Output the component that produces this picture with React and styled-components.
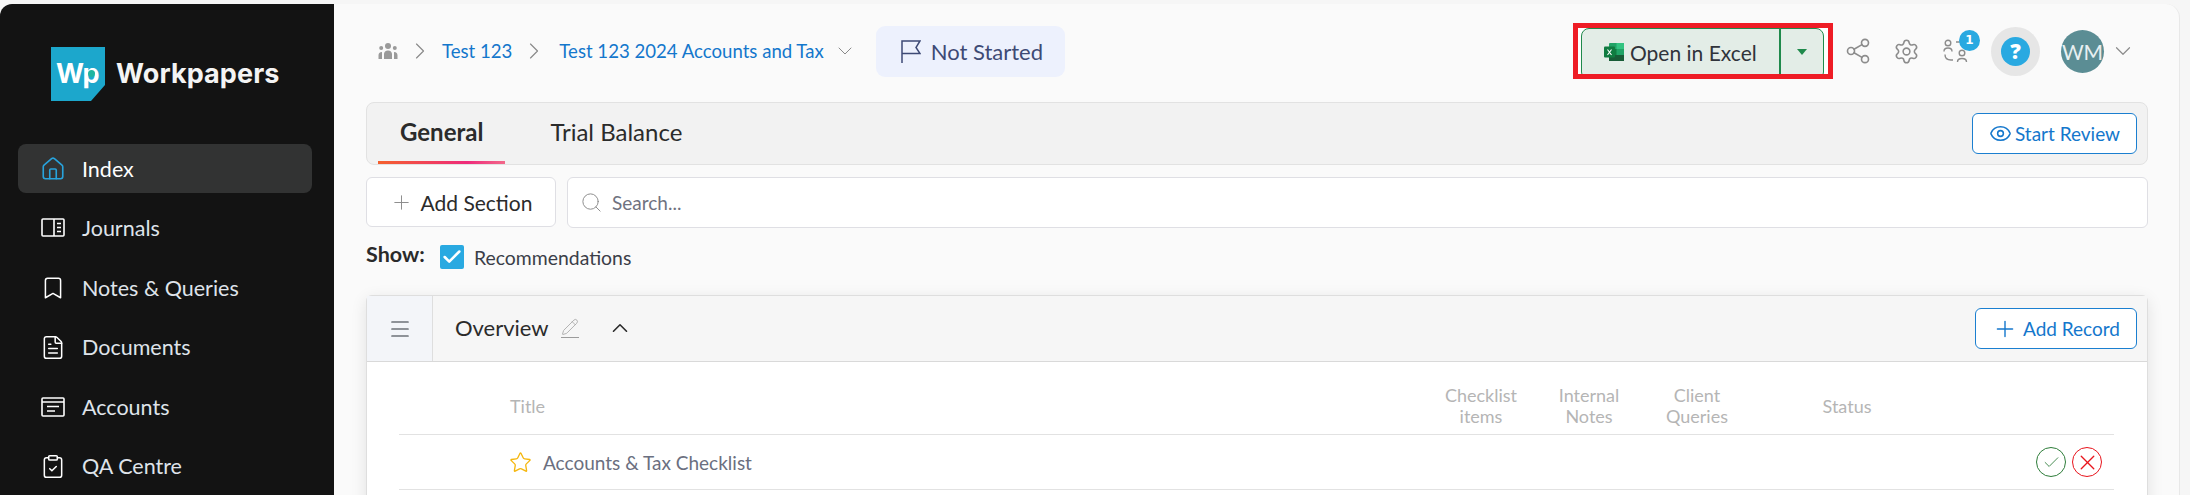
import styled, { createGlobalStyle } from "styled-components";
import {
	Bookmark,
	Check,
	ChevronDown,
	ChevronRight,
	ChevronUp,
	ClipboardCheck,
	Eye,
	FileText,
	House,
	Menu,
	Pencil,
	Plus,
	Search,
	Settings,
	Share2,
	Star,
	X,
} from "lucide-react";

const navItems = [
	{ label: "Index", icon: <House size={26} strokeWidth={1.5} />, active: true },
	{ label: "Journals", icon: <JournalIcon /> },
	{ label: "Notes & Queries", icon: <Bookmark size={28} strokeWidth={1.4} /> },
	{ label: "Documents", icon: <FileText size={27} strokeWidth={1.4} /> },
	{ label: "Accounts", icon: <AccountsIcon /> },
	{ label: "QA Centre", icon: <ClipboardCheck size={27} strokeWidth={1.4} /> },
];

const columns = [
	{ lines: ["Checklist", "items"], width: "108px" },
	{ lines: ["Internal", "Notes"], width: "108px" },
	{ lines: ["Client", "Queries"], width: "108px" },
	{ lines: ["Status"], width: "192px" },
];

function JournalIcon() {
	return (
		<svg width="26" height="22" viewBox="0 0 26 22" fill="none" stroke="currentColor" strokeWidth="1.6">
			<rect x="2" y="2" width="22" height="17" rx="1" />
			<path d="M14 2v17M17 6.5h4M17 10.5h4M17 14.5h4" />
		</svg>
	);
}

function AccountsIcon() {
	return (
		<svg width="26" height="22" viewBox="0 0 26 22" fill="none" stroke="currentColor" strokeWidth="1.6">
			<rect x="2" y="2" width="22" height="18" rx="1" />
			<path d="M2 6h22M7 10.5h12M7 15h8" />
		</svg>
	);
}

function TeamIcon() {
	return (
		<svg width="20" height="18" viewBox="0 0 20 18" fill="#9a9a9a">
			<circle cx="10" cy="4" r="3" />
			<circle cx="3.2" cy="6" r="2" />
			<circle cx="16.8" cy="6" r="2" />
			<path d="M6 17v-5c0-2 1.500-3.600 4-3.600s4 1.600 4 3.600v5zM0.500 17v-3.500c0-2 1-3.500 3.500-3.500v7zM19.500 17v-3.500c0-2-1-3.500-3.500-3.500v7z" />
		</svg>
	);
}

function FlagIcon() {
	return (
		<svg width="20" height="23" viewBox="0 0 20 23" fill="none" stroke="currentColor" strokeWidth="1.5">
			<path d="M1 23V1H19L15 7.500L19 13.500H1" />
		</svg>
	);
}

function ExcelIcon() {
	return (
		<svg width="20" height="20" viewBox="0 0 20 20">
			<rect x="5" y="1" width="15" height="18" rx="1" fill="#21a366" />
			<rect x="12.500" y="1" width="7.500" height="6" fill="#33c481" />
			<rect x="5" y="7" width="7.500" height="6" fill="#107c41" />
			<rect x="5" y="13" width="15" height="6" fill="#185c37" />
			<rect x="0" y="4.500" width="11" height="11" rx="1" fill="#107c41" />
			<path d="M3.500 7.500l4 5.500M7.500 7.500l-4 5.500" stroke="#fff" strokeWidth="1.100" />
		</svg>
	);
}

function SwapUsersIcon() {
	return (
		<svg width="25" height="24" viewBox="0 0 25 24" fill="none" stroke="#8c8c8c" strokeWidth="1.400">
			<circle cx="5" cy="4" r="2.800" />
			<path d="M1 12.500c0-2.500 1.600-3.500 4-3.500s4 1 4 3.500" />
			<circle cx="19" cy="14" r="2.800" />
			<path d="M14.500 23c0-2.500 2-3.500 4.500-3.500s4.500 1 4.500 3.500" />
			<path d="M13 3h6M2 15.500c0 3.500 2 5.500 6 5.500h2" />
		</svg>
	);
}

function LogoMark() {
	return (
		<svg width="54" height="54" viewBox="0 0 54 54">
			<path d="M0 0H54V38L40 54H0z" fill="#1ca7cc" />
		</svg>
	);
}

const App = () => {
	return (
		<Page>
			<GlobalStyle />
			<Sidebar>
				<Brand>
					<LogoBox>
						<LogoMark />
						<LogoText>
							W<LogoP>p</LogoP>
						</LogoText>
					</LogoBox>
					<BrandName>Workpapers</BrandName>
				</Brand>
				<Nav>
					{navItems.map((item) => (
						<NavItem key={item.label} $active={item.active}>
							<NavIcon $active={item.active}>{item.icon}</NavIcon>
							{item.label}
						</NavItem>
					))}
				</Nav>
			</Sidebar>
			<Main>
				<Header>
					<Crumbs>
						<TeamIcon />
						<CrumbArrow $after="8px">
							<ChevronRight size={28} strokeWidth={1} />
						</CrumbArrow>
						<CrumbLink>Test 123</CrumbLink>
						<CrumbArrow $after="11px">
							<ChevronRight size={28} strokeWidth={1} />
						</CrumbArrow>
						<CrumbLink>Test 123 2024 Accounts and Tax</CrumbLink>
						<CrumbCaret>
							<ChevronDown size={24} strokeWidth={1} />
						</CrumbCaret>
						<StatusPill>
							<FlagIcon />
							Not Started
						</StatusPill>
					</Crumbs>
					<Actions>
						<Highlight>
							<ExcelButton>
								<ExcelMain>
									<ExcelIcon />
									Open in Excel
								</ExcelMain>
								<ExcelCaret>
									<Caret />
								</ExcelCaret>
							</ExcelButton>
						</Highlight>
						<ToolIcon>
							<Share2 size={28} strokeWidth={1.4} />
						</ToolIcon>
						<ToolIcon>
							<Settings size={27} strokeWidth={1.4} />
						</ToolIcon>
						<ToolIcon>
							<SwapUsersIcon />
							<Badge>1</Badge>
						</ToolIcon>
						<HelpRing>
							<HelpDot>?</HelpDot>
						</HelpRing>
						<Avatar>WM</Avatar>
						<AvatarCaret>
							<ChevronDown size={26} strokeWidth={1.1} />
						</AvatarCaret>
					</Actions>
				</Header>
				<Content>
					<TabBar>
						<Tabs>
							<Tab $active>General</Tab>
							<Tab>Trial Balance</Tab>
						</Tabs>
						<OutlineButton $width="165px" $gap="3px">
							<Eye size={23} strokeWidth={1.6} />
							Start Review
						</OutlineButton>
					</TabBar>
					<SearchRow>
						<AddSection>
							<Plus size={23} strokeWidth={1} />
							Add Section
						</AddSection>
						<SearchBox>
							<Search size={23} strokeWidth={1} />
							Search...
						</SearchBox>
					</SearchRow>
					<ShowRow>
						<ShowLabel>Show:</ShowLabel>
						<CheckBox>
							<Check size={22} strokeWidth={2.8} />
						</CheckBox>
						<CheckLabel>Recommendations</CheckLabel>
					</ShowRow>
					<Card>
						<CardHeader>
							<Handle>
								<Menu size={24} strokeWidth={1.7} />
							</Handle>
							<CardTitle>
								Overview
								<EditIcon>
									<Pencil size={18} strokeWidth={1} />
								</EditIcon>
								<CollapseIcon>
									<ChevronUp size={26} strokeWidth={1.5} />
								</CollapseIcon>
							</CardTitle>
							<OutlineButton $width="162px" $gap="5px">
								<Plus size={26} strokeWidth={1.3} />
								Add Record
							</OutlineButton>
						</CardHeader>
						<Table>
							<HeadRow>
								<TitleHead>Title</TitleHead>
								{columns.map((col) => (
									<HeadCell key={col.lines[0]} $width={col.width}>
										{col.lines.map((line) => (
											<div key={line}>{line}</div>
										))}
									</HeadCell>
								))}
								<Spacer />
							</HeadRow>
							<BodyRow>
								<RowTitle>
									<Star size={23} strokeWidth={1.4} color="#f5b70f" />
									Accounts &amp; Tax Checklist
								</RowTitle>
								<RowActions>
									<RoundAction $color="#2e7d3a">
										<Check size={19} strokeWidth={1.1} />
									</RoundAction>
									<RoundAction $color="#e8141c">
										<X size={25} strokeWidth={1.3} />
									</RoundAction>
								</RowActions>
							</BodyRow>
						</Table>
					</Card>
				</Content>
			</Main>
		</Page>
	);
};

const GlobalStyle = createGlobalStyle`
	html, body {
		margin: 0;
		height: 495px;
		overflow: hidden;
		background: #f6f6f6;
		font-family: Lato, "Liberation Sans", sans-serif;
	}
`;
const Page = styled.div`
	display: flex;
	width: 2190px;
	height: 495px;
	padding-top: 4px;
	box-sizing: border-box;
	overflow: hidden;
`;
const Sidebar = styled.aside`
	width: 334px;
	flex-shrink: 0;
	background-color: #131313;
	border-top-left-radius: 12px;
	padding: 43px 22px 0 18px;
	box-sizing: border-box;
`;
const Brand = styled.div`
	display: flex;
	align-items: center;
	gap: 11px;
	padding-left: 33px;
	height: 54px;
`;
const LogoBox = styled.div`
	position: relative;
	width: 54px;
	height: 54px;
`;
const LogoText = styled.span`
	position: absolute;
	left: 5px;
	top: 10px;
	font: 700 27px/34px Inter, sans-serif;
	letter-spacing: -0.5px;
	color: #fff;
`;
const LogoP = styled.span`
	position: relative;

	&::after {
		content: "";
		position: absolute;
		left: 5px;
		top: 13px;
		width: 7px;
		height: 7px;
		border-radius: 50%;
		background-color: #1fb5a0;
	}
`;
const BrandName = styled.span`
	font: 700 27px/34px Inter, sans-serif;
	letter-spacing: 0.1px;
	color: #f4f4f4;
`;
const Nav = styled.nav`
	display: flex;
	flex-direction: column;
	margin-top: 43px;
`;
const NavItem = styled.a`
	display: flex;
	align-items: center;
	gap: 16px;
	height: 49px;
	margin-bottom: 10.5px;
	padding-left: 22px;
	border-radius: 8px;
	font-size: 21.5px;
	color: ${(p) => (p.$active ? "#ffffff" : "#dfe3ea")};
	background-color: ${(p) => (p.$active ? "#323333" : "transparent")};
`;
const NavIcon = styled.span`
	display: flex;
	justify-content: center;
	width: 26px;
	color: ${(p) => (p.$active ? "#28a3dc" : "#ffffff")};
`;
const Main = styled.main`
	width: 1846px;
	flex-shrink: 0;
	background-color: #fafafa;
	border-top-right-radius: 14px;
	border-right: 1px solid #e8e8e8;
	box-sizing: border-box;
`;
const Header = styled.header`
	display: flex;
	align-items: center;
	justify-content: space-between;
	height: 98px;
	padding: 0 43px 4px 44px;
	box-sizing: border-box;
`;
const Crumbs = styled.div`
	display: flex;
	align-items: center;
`;
const CrumbArrow = styled.span`
	display: flex;
	margin: 0 ${(p) => p.$after} 0 8px;
	color: #8a8a8a;
`;
const CrumbLink = styled.a`
	font-size: 18.6px;
	color: #1477cc;
`;
const CrumbCaret = styled.span`
	display: flex;
	margin-left: 9px;
	color: #8a8a8a;
`;
const StatusPill = styled.div`
	display: flex;
	align-items: center;
	gap: 10px;
	height: 51px;
	margin-left: 19px;
	padding: 0 22px 0 25px;
	border-radius: 9px;
	background-color: #edf1fd;
	font-size: 22px;
	color: #3e4a75;
`;
const Actions = styled.div`
	display: flex;
	align-items: center;
`;
const Highlight = styled.div`
	border: 5px solid #ee1c25;
	padding: 0 4px 0 3px;
	background-color: #fff;
	height: 56px;
	box-sizing: border-box;
	overflow: hidden;
`;
const ExcelButton = styled.div`
	display: flex;
	width: 243px;
	height: 52px;
	background-color: #e3ede7;
	border: 1px solid #1f8a4c;
	border-radius: 8px;
	box-sizing: border-box;
`;
const ExcelMain = styled.div`
	display: flex;
	align-items: center;
	gap: 6px;
	width: 199px;
	height: 46px;
	padding-left: 22px;
	box-sizing: border-box;
	border-right: 2px solid #1f8a4c;
	font-size: 21px;
	color: #30343b;
`;
const ExcelCaret = styled.div`
	display: flex;
	flex: 1;
	align-items: center;
	justify-content: center;
	height: 46px;
`;
const Caret = styled.span`
	border-left: 5px solid transparent;
	border-right: 5px solid transparent;
	border-top: 6px solid #1f8a4c;
`;
const ToolIcon = styled.div`
	position: relative;
	display: flex;
	align-items: center;
	justify-content: center;
	width: 49px;
	color: #8c8c8c;
`;
const Badge = styled.span`
	position: absolute;
	top: -9px;
	right: 0;
	width: 21px;
	height: 21px;
	border-radius: 50%;
	background-color: #29a9e1;
	color: #fff;
	font: 700 12px/21px "DejaVu Sans", sans-serif;
	text-align: center;
`;
const HelpRing = styled.div`
	display: flex;
	align-items: center;
	justify-content: center;
	width: 49px;
	height: 49px;
	margin-left: 11px;
	border-radius: 50%;
	background-color: #e6e6e6;
`;
const HelpDot = styled.span`
	width: 29px;
	height: 29px;
	border-radius: 50%;
	background-color: #29a9e1;
	color: #fff;
	font: 800 21px/29px "Open Sans", sans-serif;
	text-align: center;
`;
const Avatar = styled.div`
	width: 43px;
	height: 43px;
	margin-left: 21px;
	border-radius: 50%;
	background-color: #5b8d94;
	color: #e8f0f1;
	font-size: 21px;
	line-height: 43px;
	text-align: center;
`;
const AvatarCaret = styled.span`
	display: flex;
	margin-left: 6px;
	color: #8c8c8c;
`;
const Content = styled.div`
	padding: 0 31px 0 32px;
`;
const TabBar = styled.div`
	display: flex;
	align-items: center;
	justify-content: space-between;
	height: 63px;
	padding-right: 10px;
	box-sizing: border-box;
	border: 1px solid #e2e2e2;
	border-radius: 8px;
	background-color: #f2f2f2;
`;
const Tabs = styled.div`
	display: flex;
	align-self: stretch;
	padding-left: 11px;
	gap: 23px;
`;
const Tab = styled.div`
	display: flex;
	align-items: center;
	padding: 0 22px 1px;
	font-size: 24px;
	font-weight: ${(p) => (p.$active ? 700 : 400)};
	color: #2b2b2b;
	border-bottom: 3px solid transparent;
	border-image: ${(p) => (p.$active ? "linear-gradient(90deg, #f4612c, #ef2b7b 70%, #f26a8a) 1" : "none")};
`;
const OutlineButton = styled.button`
	display: flex;
	align-items: center;
	justify-content: center;
	gap: ${(p) => p.$gap};
	width: ${(p) => p.$width};
	height: 41px;
	padding: 0;
	border: 1px solid #1b7fd0;
	border-radius: 6px;
	background-color: #fff;
	color: #1477cc;
	font-family: inherit;
	font-size: 19px;
`;
const SearchRow = styled.div`
	display: flex;
	gap: 11px;
	margin-top: 12px;
`;
const AddSection = styled.button`
	display: flex;
	align-items: center;
	justify-content: center;
	gap: 8px;
	width: 190px;
	height: 50px;
	flex-shrink: 0;
	padding: 0;
	border: 1px solid #dfdfe4;
	border-radius: 6px;
	background-color: #fff;
	color: #2b2b2b;
	font-family: inherit;
	font-size: 21px;

	svg {
		color: #8a8a8a;
	}
`;
const SearchBox = styled.div`
	display: flex;
	flex: 1;
	align-items: center;
	gap: 9px;
	height: 51px;
	padding-left: 12px;
	box-sizing: border-box;
	border: 1px solid #dfdfe4;
	border-radius: 6px;
	background-color: #fff;
	color: #6f7280;
	font-size: 19px;

	svg {
		color: #8a8a8a;
	}
`;
const ShowRow = styled.div`
	display: flex;
	align-items: center;
	height: 24px;
	margin-top: 17px;
`;
const ShowLabel = styled.span`
	width: 74px;
	margin-top: -6px;
	font-size: 21.5px;
	font-weight: 700;
	color: #2a2a2a;
`;
const CheckBox = styled.span`
	display: flex;
	align-items: center;
	justify-content: center;
	width: 24px;
	height: 24px;
	border-radius: 2px;
	background-color: #29a9e1;
	color: #fff;
`;
const CheckLabel = styled.span`
	margin-left: 10px;
	font-size: 19.4px;
	color: #3b3e48;
`;
const Card = styled.section`
	margin-top: 26px;
	border: 1px solid #dedede;
	border-radius: 6px 6px 0 0;
	background-color: #fff;
	box-shadow: 0 4px 16px rgba(0, 0, 0, 0.1);
`;
const CardHeader = styled.div`
	display: flex;
	align-items: center;
	height: 65px;
	padding-right: 10px;
	background-color: #f6f6f6;
	border-bottom: 1px solid #d9d9d9;
`;
const Handle = styled.div`
	display: flex;
	align-items: center;
	justify-content: center;
	width: 65px;
	align-self: stretch;
	background-color: #f3f5f9;
	border-right: 1px solid #dedede;
	color: #6e7278;
`;
const CardTitle = styled.div`
	display: flex;
	flex: 1;
	align-items: center;
	padding: 0 0 2px 22px;
	font-size: 22px;
	color: #2b2b2b;
`;
const EditIcon = styled.span`
	display: flex;
	margin-left: 12px;
	padding-bottom: 1px;
	border-bottom: 1px solid #9c9c9c;
	color: #9c9c9c;
`;
const CollapseIcon = styled.span`
	display: flex;
	margin-left: 28px;
	color: #2b2b2b;
`;
const Table = styled.div`
	padding: 0 33px 60px 32px;
`;
const HeadRow = styled.div`
	display: flex;
	align-items: center;
	height: 73px;
	padding-top: 16px;
	box-sizing: border-box;
	border-bottom: 1px solid #e2e2e2;
	color: #b5b5b5;
	font-size: 18px;
`;
const TitleHead = styled.div`
	flex: 1;
	padding-left: 111px;
`;
const HeadCell = styled.div`
	width: ${(p) => p.$width};
	text-align: center;
	line-height: 21px;
`;
const Spacer = styled.div`
	width: 171px;
`;
const BodyRow = styled.div`
	display: flex;
	align-items: center;
	justify-content: space-between;
	height: 54px;
	border-bottom: 1px solid #e2e2e2;
`;
const RowTitle = styled.div`
	display: flex;
	align-items: center;
	gap: 11px;
	padding-left: 110px;
	font-size: 19px;
	color: #6b6f80;
`;
const RowActions = styled.div`
	display: flex;
	gap: 6px;
	padding-right: 12px;
`;
const RoundAction = styled.span`
	display: flex;
	align-items: center;
	justify-content: center;
	width: 30px;
	height: 30px;
	box-sizing: border-box;
	border: 1px solid ${(p) => p.$color};
	border-radius: 50%;
	color: ${(p) => p.$color};
`;

export default App;
